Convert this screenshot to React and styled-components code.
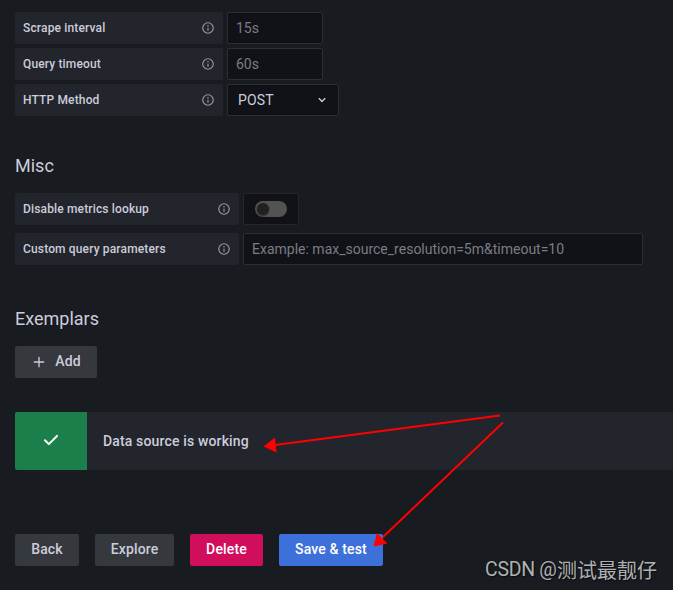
import React from 'react';
import styled, { createGlobalStyle } from 'styled-components';

const GlobalStyle = createGlobalStyle`
  * { box-sizing: border-box; }
  body {
    margin: 0;
    overflow: hidden;
    background: #181b1f;
    color: #ccccdc;
    font-family: Roboto, "Noto Sans CJK SC", sans-serif;
    font-size: 14px;
    line-height: 22px;
    letter-spacing: 0.15px;
  }
`;

const Page = styled.main`
  position: relative;
  width: 673px;
  height: 590px;
  padding: 12px 0 0 15px;
  overflow: hidden;
`;

const Fields = styled.section`
  display: flex;
  flex-direction: column;
  gap: ${(p) => p.$gap}px;
`;

const Row = styled.div`
  display: flex;
  gap: 4px;
  height: 32px;
`;

const Label = styled.label`
  display: flex;
  align-items: center;
  justify-content: space-between;
  width: ${(p) => p.$width}px;
  padding: 0 8px;
  border-radius: 2px;
  background: #22252b;
  font-size: 12px;
  font-weight: 500;
  letter-spacing: 0.15px;
`;

const Input = styled.input`
  width: ${(p) => p.$width}px;
  height: 32px;
  padding: 0 8px;
  border: 1px solid #2d2e34;
  border-radius: 2px;
  outline: 0;
  background: #111217;
  color: #ccccdc;
  font: inherit;
  letter-spacing: 0;
  &::placeholder { color: #7b7c84; opacity: 1; }
`;

const Select = styled.div`
  display: flex;
  align-items: center;
  justify-content: space-between;
  width: 112px;
  padding: 0 8px 0 10px;
  border: 1px solid #2d2e34;
  border-radius: 2px;
  background: #111217;
`;

const SwitchBox = styled.div`
  display: flex;
  align-items: center;
  justify-content: center;
  width: 56px;
  border: 1px solid #25262b;
  border-radius: 2px;
  background: #111217;
`;

const SwitchTrack = styled.div`
  display: flex;
  align-items: center;
  width: 32px;
  height: 16px;
  padding-left: 2px;
  border-radius: 8px;
  background: #535353;
`;

const SwitchThumb = styled.div`
  width: 12px;
  height: 12px;
  border-radius: 50%;
  background: #212121;
  box-shadow: 0 1px 2px rgba(0, 0, 0, 0.5);
`;

const Heading = styled.h3`
  margin: ${(p) => p.$top}px 0 ${(p) => p.$bottom}px;
  font-size: 18px;
  line-height: 22px;
  font-weight: 400;
  letter-spacing: 0;
`;

const variants = {
  secondary: ['#35383d', '#ccccdc'],
  danger: ['#d10e5c', '#ffffff'],
  primary: ['#3d71d9', '#ffffff'],
};

const Button = styled.button`
  display: flex;
  align-items: center;
  justify-content: center;
  width: ${(p) => p.$width}px;
  height: 32px;
  padding: 0 0 2px;
  gap: 8px;
  border: 0;
  border-radius: 2px;
  background: ${(p) => variants[p.$variant || 'secondary'][0]};
  color: ${(p) => variants[p.$variant || 'secondary'][1]};
  font: 500 14px/22px Roboto, sans-serif;
  letter-spacing: 0.15px;
  svg { margin-top: 2px; }
`;

const Alert = styled.div`
  display: flex;
  height: 58px;
  margin-top: 34px;
  border-radius: 2px 0 0 2px;
  overflow: hidden;
  background: #22252b;
`;

const AlertIcon = styled.div`
  display: flex;
  align-items: center;
  justify-content: center;
  width: 72px;
  padding-bottom: 2px;
  background: #1a7f4b;
`;

const AlertTitle = styled.div`
  padding: 18px 16px;
  font-weight: 500;
`;

const Actions = styled.div`
  display: flex;
  gap: 16px;
  margin-top: 64px;
`;

const Arrows = styled.svg`
  position: absolute;
  left: 0;
  top: 0;
  pointer-events: none;
`;

const Watermark = styled.div`
  position: absolute;
  left: 485px;
  top: 556px;
  display: flex;
  color: #b0b1b2;
  font: 400 20px/28px "Noto Sans CJK SC", sans-serif;
  letter-spacing: 0;
  white-space: nowrap;
  text-shadow: 1px 1px 1px rgba(0, 0, 0, 0.6);
`;

const Latin = styled.span`
  width: 72px;
  font-family: Roboto, sans-serif;
  font-size: 19.5px;
  letter-spacing: -0.3px;
`;

const InfoIcon = () => (
  <svg width="14" height="14" viewBox="0 0 24 24" fill="#9899a4">
    <path d="M12 2a10 10 0 1 0 10 10A10 10 0 0 0 12 2Zm0 18a8 8 0 1 1 8-8 8 8 0 0 1-8 8Zm0-9a1 1 0 0 0-1 1v4a1 1 0 0 0 2 0v-4a1 1 0 0 0-1-1Zm0-4a1.25 1.25 0 1 0 1.25 1.25A1.25 1.25 0 0 0 12 7Z" />
  </svg>
);

const ChevronIcon = () => (
  <svg width="16" height="16" viewBox="0 0 24 24" fill="#ccccdc">
    <path d="M17 9.17a1 1 0 0 0-1.41 0L12 12.71 8.46 9.17a1 1 0 0 0-1.41 0 1 1 0 0 0 0 1.42l4.24 4.24a1 1 0 0 0 1.42 0L17 10.59a1 1 0 0 0 0-1.42Z" />
  </svg>
);

const PlusIcon = () => (
  <svg width="16" height="16" viewBox="0 0 24 24" fill="#ccccdc">
    <path d="M19 11h-6V5a1 1 0 0 0-2 0v6H5a1 1 0 0 0 0 2h6v6a1 1 0 0 0 2 0v-6h6a1 1 0 0 0 0-2Z" />
  </svg>
);

const CheckIcon = () => (
  <svg width="24" height="24" viewBox="0 0 24 24" fill="#ffffff">
    <path d="M18.71 7.21a1 1 0 0 0-1.42 0l-7.45 7.46-3.13-3.14A1 1 0 1 0 5.29 13l3.84 3.84a1 1 0 0 0 1.42 0l8.16-8.16a1 1 0 0 0 0-1.47Z" />
  </svg>
);

const Field = ({ label, width, children }) => (
  <Row>
    <Label $width={width}>{label}<InfoIcon /></Label>
    {children}
  </Row>
);

export default function App() {
  return (
    <>
      <GlobalStyle />
      <Page>
        <Fields $gap={4}>
          <Field label="Scrape interval" width={208}><Input $width={96} placeholder="15s" /></Field>
          <Field label="Query timeout" width={208}><Input $width={96} placeholder="60s" /></Field>
          <Field label="HTTP Method" width={208}><Select>POST<ChevronIcon /></Select></Field>
        </Fields>

        <Heading $top={39} $bottom={16}>Misc</Heading>
        <Fields $gap={8}>
          <Field label="Disable metrics lookup" width={224}>
            <SwitchBox><SwitchTrack><SwitchThumb /></SwitchTrack></SwitchBox>
          </Field>
          <Field label="Custom query parameters" width={224}>
            <Input $width={400} placeholder="Example: max_source_resolution=5m&timeout=10" />
          </Field>
        </Fields>

        <Heading $top={43} $bottom={16}>Exemplars</Heading>
        <Button $width={82}><PlusIcon />Add</Button>

        <Alert>
          <AlertIcon><CheckIcon /></AlertIcon>
          <AlertTitle>Data source is working</AlertTitle>
        </Alert>

        <Actions>
          <Button $width={64}>Back</Button>
          <Button $width={79}>Explore</Button>
          <Button $width={73} $variant="danger">Delete</Button>
          <Button $width={104} $variant="primary">Save &amp; test</Button>
        </Actions>

        <Arrows width="673" height="590" viewBox="0 0 673 590" fill="#ff0000" stroke="#ff0000">
          <path d="M500 415.5 L275 445 M503 422.500 L383 537" strokeWidth="2" fill="none" />
          <path d="M263.500 446.500 L275 437.500 L276.500 452.500 Z M373.500 546.500 L377 533 L387.500 543.500 Z" stroke="none" />
        </Arrows>
        <Watermark><Latin>CSDN @</Latin>测试最靓仔</Watermark>
      </Page>
    </>
  );
}
